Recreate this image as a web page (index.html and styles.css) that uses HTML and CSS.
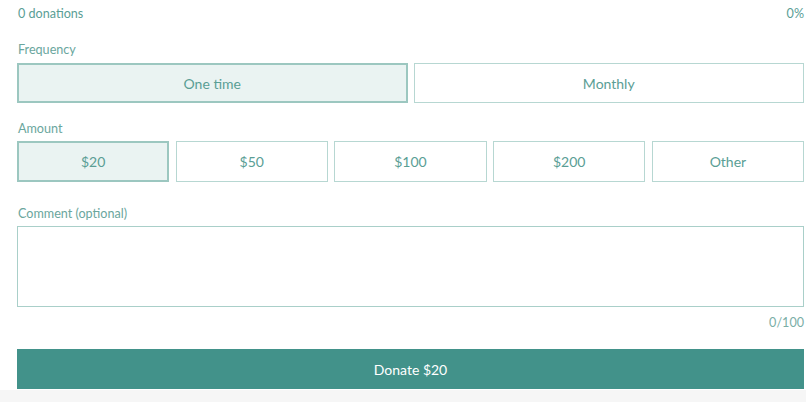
FILE: index.html
```html
<!DOCTYPE html>
<html lang="en">
<head>
<meta charset="utf-8">
<title>Donate</title>
<link rel="stylesheet" href="styles.css">
</head>
<body>
<div class="page">
  <div class="stats">
    <span>0 donations</span>
    <span>0%</span>
  </div>

  <div class="label label-first">Frequency</div>
  <div class="options options-2">
    <button class="opt selected">One time</button>
    <button class="opt">Monthly</button>
  </div>

  <div class="label label-amount">Amount</div>
  <div class="options options-5">
    <button class="opt selected">$20</button>
    <button class="opt">$50</button>
    <button class="opt">$100</button>
    <button class="opt">$200</button>
    <button class="opt">Other</button>
  </div>

  <div class="label label-comment">Comment (optional)</div>
  <textarea class="comment"></textarea>
  <div class="counter">0/100</div>

  <button class="donate">Donate $20</button>
</div>
<div class="footer-band"></div>
</body>
</html>
```

FILE: styles.css
```css
html, body {
  margin: 0;
  padding: 0;
  background: #ffffff;
}

body {
  font-family: "Lato", "Noto Sans", sans-serif;
  color: #5a9e95;
}

.page {
  width: 787px;
  padding: 0 2px 0 17px;
}

.stats {
  display: flex;
  justify-content: space-between;
  height: 27px;
  line-height: 27px;
  font-size: 12.6px;
  color: #5a9e95;
  padding-left: 1px;
}

.label {
  font-size: 12.6px;
  line-height: 16px;
  color: #6aa69d;
  margin-bottom: 5px;
  padding-left: 1px;
}

.label-first {
  margin-top: 15px;
}

.label-amount {
  margin-top: 18px;
  margin-bottom: 4px;
}

.label-comment {
  margin-top: 24px;
  margin-bottom: 4px;
}

.options {
  display: grid;
}

.options-2 {
  grid-template-columns: 1fr 1fr;
  gap: 6px;
}

.options-5 {
  grid-template-columns: repeat(5, 1fr);
  gap: 6.5px;
}

.opt {
  height: 40px;
  border: 1px solid #b7d7d2;
  background: #ffffff;
  font-family: inherit;
  font-size: 14px;
  color: #5a9e95;
  padding: 0;
  margin: 0;
  cursor: pointer;
}

.opt.selected {
  border: 2px solid #9cc7c0;
  background: #eaf3f2;
}

.options-5 .opt {
  height: 41px;
}

.comment {
  display: block;
  box-sizing: border-box;
  width: 787px;
  height: 81px;
  margin: 0;
  border: 1px solid #a9cfc9;
  resize: none;
  font-family: inherit;
}

.counter {
  text-align: right;
  font-size: 12.6px;
  line-height: 16px;
  margin-top: 8px;
  color: #7aaea6;
}

.donate {
  display: block;
  width: 787px;
  height: 40px;
  margin: 18px 0 0;
  border: none;
  background: #42928a;
  color: #ffffff;
  font-family: inherit;
  font-size: 14px;
  padding: 0;
}

.footer-band {
  margin-top: 1px;
  height: 12px;
  background: #f6f6f6;
}
```
